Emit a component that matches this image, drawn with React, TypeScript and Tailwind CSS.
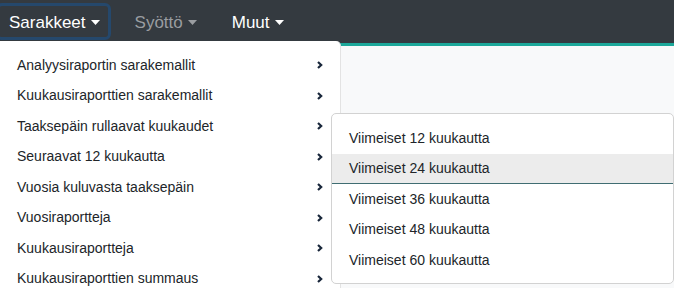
import React from "react";

const mainItems = [
  "Analyysiraportin sarakemallit",
  "Kuukausiraporttien sarakemallit",
  "Taaksepäin rullaavat kuukaudet",
  "Seuraavat 12 kuukautta",
  "Vuosia kuluvasta taaksepäin",
  "Vuosiraportteja",
  "Kuukausiraportteja",
  "Kuukausiraporttien summaus",
];

const subItems = [
  "Viimeiset 12 kuukautta",
  "Viimeiset 24 kuukautta",
  "Viimeiset 36 kuukautta",
  "Viimeiset 48 kuukautta",
  "Viimeiset 60 kuukautta",
];

const Caret = ({ className }: { className: string }) => (
  <svg width="9" height="5" viewBox="0 0 9 5" className={className}>
    <path d="M0 0h9L4.5 5z" fill="currentColor" />
  </svg>
);

const Chevron = () => (
  <svg width="6" height="8" viewBox="0 0 6 8" className="text-[#18263a]">
    <path d="M1 1l3.2 3L1 7" fill="none" stroke="currentColor" strokeWidth="2.2" />
  </svg>
);

export default function App() {
  return (
    <div
      className="relative w-[674px] h-[288px] overflow-hidden bg-[#f8f9fa]"
      style={{ fontFamily: '"Liberation Sans", Arial, sans-serif' }}
    >
      {/* navbar */}
      <nav className="h-[43px] bg-[#343a40] flex items-center text-[17px]">
        <button className="-ml-[4px] h-[37px] pt-[2px] pl-[10px] pr-[8px] flex items-center gap-[5px] text-white border-[3px] border-[#25486c] rounded-[6px]">
          Sarakkeet
          <Caret className="text-white" />
        </button>
        <div className="ml-[24px] pt-[2px] flex items-center gap-[5px] text-[#9a9da1]">
          Syöttö
          <Caret className="text-[#9a9da1]" />
        </div>
        <div className="ml-[35px] pt-[2px] flex items-center gap-[5px] text-white">
          Muut
          <Caret className="text-white" />
        </div>
      </nav>
      <div className="h-[3px] bg-[#1ca89a]" />

      {/* main dropdown */}
      <div className="absolute left-0 top-[41px] w-[341px] bg-white rounded-tr-[5px] border-r border-[#e3e3e3] py-[9px] text-[14px] text-[#212529]">
        {mainItems.map((t) => (
          <div key={t} className="h-[30.5px] flex items-center justify-between pl-[17px] pr-[17px]">
            <span>{t}</span>
            <Chevron />
          </div>
        ))}
      </div>

      {/* submenu */}
      <div className="absolute left-[331px] top-[113px] w-[343px] h-[171px] bg-white border border-[#d2d2d2] rounded-[5px] py-[9px] text-[14px] text-[#212529]">
        {subItems.map((t, i) => (
          <div
            key={t}
            className={
              i === 1
                ? "h-[30.5px] flex items-center pl-[17px] bg-[#ececec] border-b border-[#3f6d72]"
                : "h-[30.5px] flex items-center pl-[17px]"
            }
          >
            {t}
          </div>
        ))}
      </div>
    </div>
  );
}
